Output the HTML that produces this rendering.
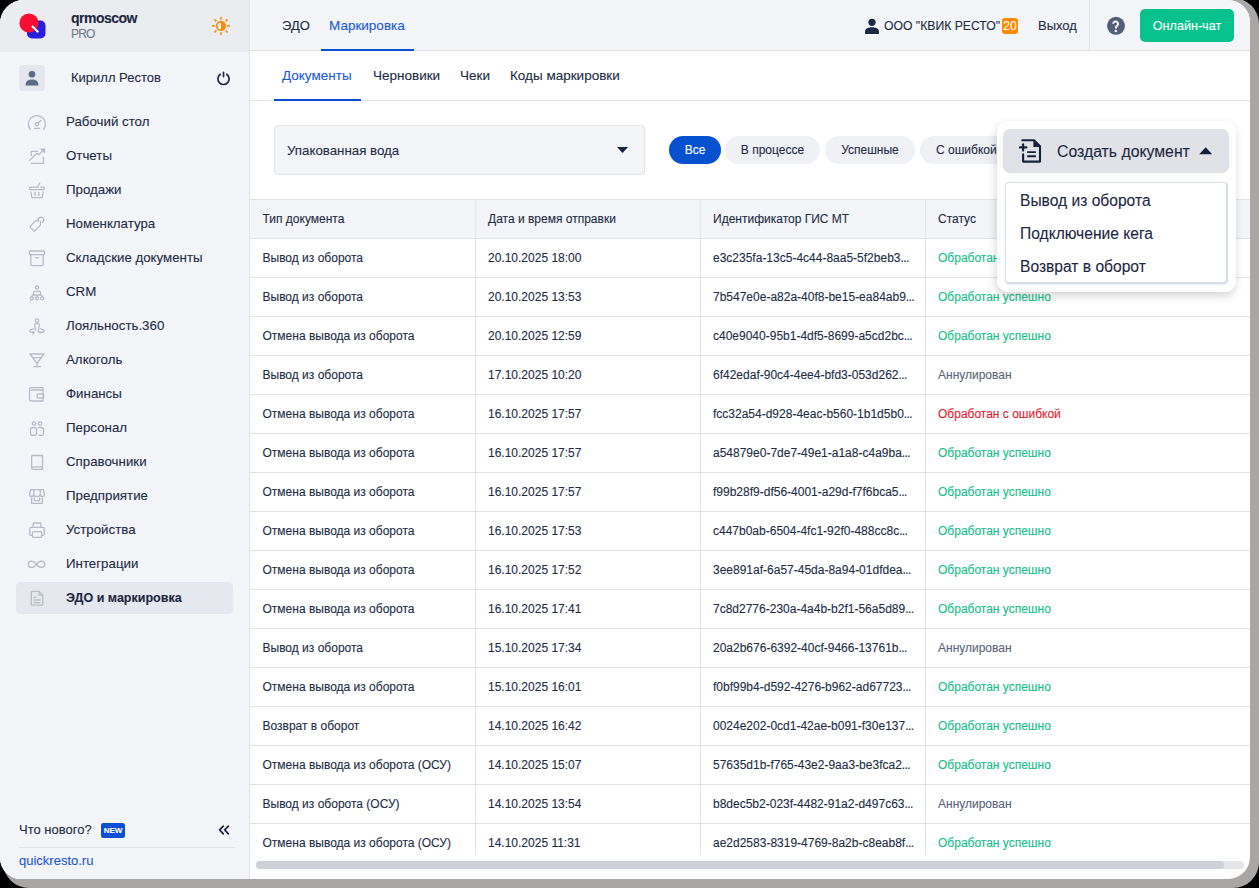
<!DOCTYPE html>
<html><head><meta charset="utf-8">
<style>
*{box-sizing:border-box;margin:0;padding:0}
html,body{width:1259px;height:888px;overflow:hidden;background:#000;font-family:"Liberation Sans",sans-serif;color:#222c43;-webkit-text-stroke:0.1px}
#shadow{position:absolute;left:3px;top:-2px;width:1256px;height:890px;background:#a9a6a6;border-radius:26px}
#win{position:absolute;left:0;top:0;width:1250px;height:879px;background:#fff;border-radius:24px 22px 22px 21px;overflow:hidden}
.abs{position:absolute;white-space:nowrap}
#side{position:absolute;left:0;top:0;width:250px;height:879px;background:#f4f5f9;border-right:1px solid #e2e3e8}
#sidehead{position:absolute;left:0;top:0;width:249px;height:52px;background:#ebecf0}
.mi{position:absolute;left:66px;font-size:13.3px;color:#222c43;line-height:16px;white-space:nowrap}
.ic{position:absolute;left:26px;width:20px;height:20px;overflow:visible}
.ic *{fill:none;stroke:#b6bcc8;stroke-width:1.3;stroke-linecap:round;stroke-linejoin:round}
#top{position:absolute;left:250px;top:0;width:1000px;height:51px;background:#f4f5f9;border-bottom:1px solid #e2e3e8}
#sub{position:absolute;left:250px;top:51px;width:1000px;height:50px;background:#fff;border-bottom:1px solid #e2e3e8}
.tab{position:absolute;font-size:13.5px;line-height:16px;white-space:nowrap;color:#222c43}
.blue{color:#1a5ada}
#tbl{position:absolute;left:250px;top:199px;width:1000px;height:656px;overflow:hidden}
table{border-collapse:collapse;font-size:12px;table-layout:fixed;width:1126px}
td,th{border:1px solid #e2e3e8;height:39px;padding:0 0 0 12.5px;text-align:left;font-weight:normal;white-space:nowrap;color:#222c43;overflow:hidden}
td:first-child,th:first-child{border-left:none}
th{background:#f4f5f9}
.ok{color:#12c08a}.ann{color:#5b6577}.err{color:#e8192c}
.pill{position:absolute;top:136px;height:28px;border-radius:14px;background:#f0f1f5;font-size:12px;line-height:28px;padding:0 16px;white-space:nowrap;color:#222c43}
</style></head><body>
<div id="shadow"></div>
<div id="win">
<div id="side">
 <div id="sidehead"></div>
 <svg class="abs" style="left:0;top:0" width="250" height="879" viewBox="0 0 250 879">
  <!-- logo -->
  <rect x="27" y="20.5" width="18.5" height="18" rx="5" fill="#2a1fe0"/>
  <circle cx="29" cy="23" r="9.6" fill="#fb0d32"/>
  <line x1="32" y1="26" x2="38.3" y2="32.3" stroke="#fff" stroke-width="2" stroke-linecap="butt"/>
  <!-- sun -->
  <g stroke="#fb8c0a" stroke-width="1.7" stroke-linecap="round" fill="none">
   <circle cx="221" cy="25.9" r="4.3"/>
   <line x1="227.90" y1="25.90" x2="229.30" y2="25.90"/><line x1="226.09" y1="30.99" x2="227.08" y2="31.98"/><line x1="221.00" y1="32.80" x2="221.00" y2="34.20"/><line x1="215.91" y1="30.99" x2="214.92" y2="31.98"/><line x1="214.10" y1="25.90" x2="212.70" y2="25.90"/><line x1="215.91" y1="20.81" x2="214.92" y2="19.82"/><line x1="221.00" y1="19.00" x2="221.00" y2="17.60"/><line x1="226.09" y1="20.81" x2="227.08" y2="19.82"/>
  </g>
  <path d="M221 21.6 A4.3 4.3 0 0 1 221 30.2 Z" fill="#fb8c0a"/>
  <!-- avatar -->
  <rect x="19" y="65" width="26" height="26" rx="4" fill="#e4e7ed"/>
  <circle cx="32" cy="74.3" r="3.3" fill="#5b6b86"/>
  <path d="M25.5 85.5 C25.5 81 28.5 79.5 32 79.5 C35.5 79.5 38.5 81 38.5 85.5 Z" fill="#5b6b86"/>
  <!-- power -->
  <g stroke="#1d2a45" stroke-width="1.7" fill="none" stroke-linecap="round">
   <path d="M220.3 74.3 A5.6 5.6 0 1 0 226.7 74.3"/>
   <line x1="223.5" y1="72.4" x2="223.5" y2="76.6"/>
  </g>
  <!-- selected bg -->
  <rect x="16" y="582" width="217" height="32" rx="5" fill="#e6e8ef"/>
  <g fill="none" stroke="#b7bdc8" stroke-width="1.3" stroke-linecap="round" stroke-linejoin="round">
   <!-- gauge -->
   <path d="M30.2 129.3 A8.5 8.5 0 1 1 43.6 129.3"/>
   <circle cx="37" cy="124.2" r="1.6"/>
   <line x1="38.2" y1="123" x2="40.8" y2="120.4"/>
   <line x1="34.4" y1="128.3" x2="39.6" y2="128.3"/>
   <!-- chart -->
   <path d="M31.3 155.6 V151.3 H37.6"/>
   <path d="M31.3 163.4 H43.5 V157"/>
   <path d="M29.3 160.6 L36.9 153.3 L38.9 154.6 L44.2 149.4"/>
   <path d="M41.2 149.2 H44.5 V152.5 Z" fill="#b7bdc8"/>
   <!-- basket -->
   <line x1="37.6" y1="187.2" x2="39.6" y2="183.2"/>
   <path d="M38 187.1 H31 Q29.6 187.1 29.6 188.4 Q29.6 189.7 31 189.7 H43 Q44.4 189.7 44.4 188.4 Q44.4 187.1 43 187.1 H41"/>
   <path d="M30.9 192 L31.9 197.6 H42.1 L43.1 192"/>
   <line x1="35.1" y1="192.4" x2="35.1" y2="195.4"/><line x1="38.8" y1="192.4" x2="38.8" y2="195.4"/>
   <!-- tag -->
   <path d="M38.5 221.4 Q37.8 220.2 36.5 220.3 Q36 220.4 35.6 220.8 L30.4 226.1 Q29.8 226.8 30.4 227.4 L33.8 230.8 Q34.4 231.4 35 230.8 L40 225.6 Q40.5 225.1 40.5 224.4 V221.4"/>
   <path d="M38.4 220.6 A2.7 2.7 0 1 1 42.4 222.3"/>
   <!-- archive -->
   <rect x="29.4" y="251" width="15.2" height="3.6" rx="1"/>
   <path d="M30.8 254.8 V264.2 Q30.8 265.6 32.2 265.6 H41.8 Q43.2 265.6 43.2 264.2 V254.8"/>
   <line x1="35.5" y1="257.8" x2="38.5" y2="257.8"/>
   <!-- crm -->
   <circle cx="37" cy="287.4" r="1.6"/>
   <path d="M33.5 294.8 V292.6 Q33.5 291.3 34.8 291.3 H39.2 Q40.5 291.3 40.5 292.6 V294.8"/>
   <path d="M31.8 296.9 Q32 295 34 295 H40 Q42 295 42.2 296.9 M37 295 V296.9"/>
   <circle cx="31.8" cy="298.4" r="1.5"/><circle cx="37" cy="298.4" r="1.5"/><circle cx="42.2" cy="298.4" r="1.5"/>
   <!-- loyalty -->
   <circle cx="37" cy="320.6" r="1.7"/>
   <path d="M35.6 330.4 L34.6 325.2 Q34.4 323.5 37 323.5 Q39.6 323.5 39.4 325.2 L38.4 330.4 Q38.4 332.5 40.5 332.5"/>
   <path d="M33.6 328.9 Q29.8 329.5 29.8 330.8 Q29.8 332.2 33.6 332.6"/>
   <path d="M40.4 328.9 Q44.2 329.5 44.2 330.8 Q44.2 332.5 40.4 332.5"/>
   <path d="M32.9 331.5 L34.1 332.6 L32.9 333.7"/>
   <!-- cocktail -->
   <path d="M30 354 H44 L37 363.5 Z"/>
   <line x1="32.6" y1="357.6" x2="41.4" y2="357.6"/>
   <line x1="37" y1="363.5" x2="37" y2="366.5"/>
   <line x1="33.6" y1="366.6" x2="40.4" y2="366.6"/>
   <!-- wallet -->
   <path d="M43 389 V387.6 H31 Q29.5 387.6 29.5 389.2 V399.4 Q29.5 401 31 401 H43 V390 H31"/>
   <rect x="37.2" y="394" width="6.4" height="4" rx="1"/>
   <!-- personnel -->
   <circle cx="34" cy="423.5" r="1.7"/><circle cx="40" cy="423.5" r="1.7"/>
   <path d="M32 435.4 Q30.9 435.4 30.8 434.4 L30.3 430.4 Q30.2 427.5 33 427.5 H34 Q36.8 427.5 36.7 430.4 L36.2 434.4 Q36.1 435.4 35 435.4 Z"/>
   <path d="M38.6 427.5 H41 Q43.8 427.5 43.7 430.4 L43.2 434.4 Q43.1 435.4 42 435.4 H38.8"/>
   <!-- book -->
   <path d="M31.6 466.8 V456.8 Q31.6 455.5 32.9 455.5 H42.5 V469.4 H33.2 Q31.6 469.4 31.6 468.1 Q31.6 466.8 33.2 466.8 H42.5"/>
   <!-- shop -->
   <path d="M30.6 489.6 H43.4 L44.4 494.2 Q44.4 496.4 42.3 496.4 Q40.2 496.4 40.2 494.2 Q40.2 496.4 37 496.4 Q33.8 496.4 33.8 494.2 Q33.8 496.4 31.7 496.4 Q29.6 496.4 29.6 494.2 Z M33.8 489.6 V494.2 M40.2 489.6 V494.2"/>
   <path d="M31.6 498 V503.4 H42.4 V498"/>
   <path d="M34.3 498 V500.6 H39.7 V498"/>
   <!-- printer -->
   <path d="M33.2 527 V523 H40.8 V527"/>
   <path d="M32.4 535.3 H30.8 Q29.8 535.3 29.8 534.3 V528.3 Q29.8 527.3 30.8 527.3 H43.2 Q44.2 527.3 44.2 528.3 V534.3 Q44.2 535.3 43.2 535.3 H41.6"/>
   <rect x="32.4" y="531.6" width="9.2" height="5.8" rx="0.8"/>
   <!-- infinity -->
   <path d="M36.5 564.3 C33.5 560 28.3 560.3 28.3 564.3 C28.3 568.3 33.5 568.6 36.5 564.3 C39.5 560 44.7 560.3 44.7 564.3 C44.7 568.3 39.5 568.6 36.5 564.3 Z"/>
   <!-- doc -->
   <path d="M39 591.3 H32.5 Q31.3 591.3 31.3 592.5 V604 Q31.3 605.2 32.5 605.2 H41.6 Q42.8 605.2 42.8 604 V595.1 Z M39 591.3 V595.1 H42.8"/>
   <line x1="34" y1="597.3" x2="36" y2="597.3"/><line x1="34" y1="600" x2="40" y2="600"/><line x1="34" y1="602.6" x2="40" y2="602.6"/>
  </g>
  <!-- NEW badge -->
  <rect x="101" y="823" width="24" height="15" rx="2.5" fill="#0b4fd3"/>
  <!-- collapse -->
  <g stroke="#1d2a45" stroke-width="1.8" fill="none" stroke-linecap="round" stroke-linejoin="round">
   <path d="M223.3 826.1 L219.6 829.9 L223.3 833.8"/><path d="M228.4 826.1 L224.7 829.9 L228.4 833.8"/>
  </g>
  <line x1="19" y1="847.5" x2="235" y2="847.5" stroke="#e2e4ea" stroke-width="1"/>
 </svg>
 <div class="abs" style="left:71px;top:9px;font-size:14px;letter-spacing:-0.5px;font-weight:bold;line-height:18px;color:#1d2740">qrmoscow</div>
 <div class="abs" style="left:71px;top:27px;font-size:12px;letter-spacing:-0.8px;line-height:14px;color:#737b8c">PRO</div>
 <div class="abs" style="left:71px;top:70px;font-size:13px;line-height:16px">Кирилл Рестов</div>
 <div class="mi" style="top:114px">Рабочий стол</div>
 <div class="mi" style="top:148px">Отчеты</div>
 <div class="mi" style="top:182px">Продажи</div>
 <div class="mi" style="top:216px">Номенклатура</div>
 <div class="mi" style="top:250px">Складские документы</div>
 <div class="mi" style="top:284px">CRM</div>
 <div class="mi" style="top:318px">Лояльность.360</div>
 <div class="mi" style="top:352px">Алкоголь</div>
 <div class="mi" style="top:386px">Финансы</div>
 <div class="mi" style="top:420px">Персонал</div>
 <div class="mi" style="top:454px">Справочники</div>
 <div class="mi" style="top:488px">Предприятие</div>
 <div class="mi" style="top:522px">Устройства</div>
 <div class="mi" style="top:556px">Интеграции</div>
 <div class="mi" style="top:590px;font-weight:bold;font-size:12.5px;color:#1d2740">ЭДО и маркировка</div>
 <div class="abs" style="left:19px;top:822px;font-size:13px;line-height:16px">Что нового?</div>
 <div class="abs" style="left:101px;top:823px;width:24px;height:15px;font-size:8px;font-weight:bold;line-height:16.5px;text-align:center;color:#fff">NEW</div>
 <div class="abs" style="left:19px;top:853px;font-size:13px;line-height:16px;color:#1a55d6">quickresto.ru</div>
</div>
<div id="top">
 <div class="tab" style="left:32px;top:18px;font-size:13px">ЭДО</div>
 <div class="tab blue" style="left:79px;top:18px">Маркировка</div>
 <div class="abs" style="left:71px;top:49px;width:93px;height:2px;background:#0b4fd3"></div>
 <svg class="abs" style="left:0;top:0" width="1000" height="50" viewBox="250 0 1000 50">
  <circle cx="872" cy="22.3" r="3.6" fill="#1d2a45"/>
  <path d="M865 34 V31.6 C865 28.4 868.5 27.3 872 27.3 C875.5 27.3 879 28.4 879 31.6 V34 Z" fill="#1d2a45"/>
  <rect x="1002" y="18" width="16" height="16" rx="3" fill="#ff8a00"/>
  <line x1="1089.5" y1="0" x2="1089.5" y2="50" stroke="#e2e3e8"/>
  <circle cx="1116" cy="25.8" r="9" fill="#535f78"/>
  <path d="M1113.2 23.8 A2.4 2.4 0 1 1 1117.3 25.5 Q1115.8 26.5 1115.8 28.4" stroke="#fff" stroke-width="1.9" fill="none"/>
  <circle cx="1115.8" cy="31" r="1.2" fill="#fff"/>
  <rect x="1140" y="9" width="94" height="33" rx="5" fill="#08c28d"/>
 </svg>
 <div class="tab" style="left:634px;top:18px;font-size:12.2px">ООО "КВИК РЕСТО"</div>
 <div class="abs" style="left:752px;top:18px;width:16px;height:16px;font-size:12px;line-height:16px;text-align:center;color:#fff">20</div>
 <div class="tab" style="left:788px;top:18px;font-size:13px">Выход</div>
  <div class="abs" style="left:890px;top:10px;width:94px;height:33px;font-size:12.6px;line-height:33px;text-align:center;color:#fff">Онлайн-чат</div>
</div>
<div id="sub">
 <div class="tab blue" style="left:32px;top:17px">Документы</div>
 <div class="tab" style="left:123px;top:17px">Черновики</div>
 <div class="tab" style="left:210px;top:17px">Чеки</div>
 <div class="tab" style="left:260px;top:17px">Коды маркировки</div>
 <div class="abs" style="left:24px;top:48px;width:87px;height:2px;background:#0b4fd3"></div>
</div>
<div class="abs" style="left:274px;top:125px;width:371px;height:50px;background:#f4f5f9;border:1px solid #e2e4ea;border-radius:4px"></div>
<div class="abs" style="left:287px;top:143px;font-size:13.3px;line-height:16px">Упакованная вода</div>
<svg class="abs" style="left:616px;top:147px" width="13" height="7" viewBox="0 0 13 7"><path d="M1 0 H12 L6.5 6 Z" fill="#14213d"/></svg>
<div class="pill" style="left:669px;width:52px;background:#0551d0;color:#fff;padding:0;text-align:center">Все</div>
<div class="pill" style="left:725px;width:95px;padding:0;text-align:center">В процессе</div>
<div class="pill" style="left:825px;width:90px;padding:0;text-align:center">Успешные</div>
<div class="pill" style="left:920px;width:110px;padding-left:16px">С ошибкой</div>
<div id="tbl"><table>
<colgroup><col style="width:225px"><col style="width:225px"><col style="width:225px"><col style="width:451px"></colgroup>
<tr><th>Тип документа</th><th>Дата и время отправки</th><th>Идентификатор ГИС МТ</th><th>Статус</th></tr>
<tr><td>Вывод из оборота</td><td>20.10.2025 18:00</td><td>e3c235fa-13c5-4c44-8aa5-5f2beb3<span style="letter-spacing:-0.6px">...</span></td><td><span class="ok">Обработан успешно</span></td></tr>
<tr><td>Вывод из оборота</td><td>20.10.2025 13:53</td><td>7b547e0e-a82a-40f8-be15-ea84ab9<span style="letter-spacing:-0.6px">...</span></td><td><span class="ok">Обработан успешно</span></td></tr>
<tr><td>Отмена вывода из оборота</td><td>20.10.2025 12:59</td><td>c40e9040-95b1-4df5-8699-a5cd2bc<span style="letter-spacing:-0.6px">...</span></td><td><span class="ok">Обработан успешно</span></td></tr>
<tr><td>Вывод из оборота</td><td>17.10.2025 10:20</td><td>6f42edaf-90c4-4ee4-bfd3-053d262<span style="letter-spacing:-0.6px">...</span></td><td><span class="ann">Аннулирован</span></td></tr>
<tr><td>Отмена вывода из оборота</td><td>16.10.2025 17:57</td><td>fcc32a54-d928-4eac-b560-1b1d5b0<span style="letter-spacing:-0.6px">...</span></td><td><span class="err">Обработан с ошибкой</span></td></tr>
<tr><td>Отмена вывода из оборота</td><td>16.10.2025 17:57</td><td>a54879e0-7de7-49e1-a1a8-c4a9ba<span style="letter-spacing:-0.6px">...</span></td><td><span class="ok">Обработан успешно</span></td></tr>
<tr><td>Отмена вывода из оборота</td><td>16.10.2025 17:57</td><td>f99b28f9-df56-4001-a29d-f7f6bca5<span style="letter-spacing:-0.6px">...</span></td><td><span class="ok">Обработан успешно</span></td></tr>
<tr><td>Отмена вывода из оборота</td><td>16.10.2025 17:53</td><td>c447b0ab-6504-4fc1-92f0-488cc8c<span style="letter-spacing:-0.6px">...</span></td><td><span class="ok">Обработан успешно</span></td></tr>
<tr><td>Отмена вывода из оборота</td><td>16.10.2025 17:52</td><td>3ee891af-6a57-45da-8a94-01dfdea<span style="letter-spacing:-0.6px">...</span></td><td><span class="ok">Обработан успешно</span></td></tr>
<tr><td>Отмена вывода из оборота</td><td>16.10.2025 17:41</td><td>7c8d2776-230a-4a4b-b2f1-56a5d89<span style="letter-spacing:-0.6px">...</span></td><td><span class="ok">Обработан успешно</span></td></tr>
<tr><td>Вывод из оборота</td><td>15.10.2025 17:34</td><td>20a2b676-6392-40cf-9466-13761b<span style="letter-spacing:-0.6px">...</span></td><td><span class="ann">Аннулирован</span></td></tr>
<tr><td>Отмена вывода из оборота</td><td>15.10.2025 16:01</td><td>f0bf99b4-d592-4276-b962-ad67723<span style="letter-spacing:-0.6px">...</span></td><td><span class="ok">Обработан успешно</span></td></tr>
<tr><td>Возврат в оборот</td><td>14.10.2025 16:42</td><td>0024e202-0cd1-42ae-b091-f30e137<span style="letter-spacing:-0.6px">...</span></td><td><span class="ok">Обработан успешно</span></td></tr>
<tr><td>Отмена вывода из оборота (ОСУ)</td><td>14.10.2025 15:07</td><td>57635d1b-f765-43e2-9aa3-be3fca2<span style="letter-spacing:-0.6px">...</span></td><td><span class="ok">Обработан успешно</span></td></tr>
<tr><td>Вывод из оборота (ОСУ)</td><td>14.10.2025 13:54</td><td>b8dec5b2-023f-4482-91a2-d497c63<span style="letter-spacing:-0.6px">...</span></td><td><span class="ann">Аннулирован</span></td></tr>
<tr><td>Отмена вывода из оборота (ОСУ)</td><td>14.10.2025 11:31</td><td>ae2d2583-8319-4769-8a2b-c8eab8f<span style="letter-spacing:-0.6px">...</span></td><td><span class="ok">Обработан успешно</span></td></tr></table></div>
<!-- scrollbar -->
<div class="abs" style="left:256px;top:861px;width:988px;height:8px;border-radius:4px;background:#e4e5e8"></div>
<div class="abs" style="left:256px;top:861px;width:968px;height:8px;border-radius:4px;background:#cdd0d6"></div>
<!-- popup -->
<div class="abs" style="left:997px;top:121px;width:239px;height:171px;background:#fff;border-radius:11px;box-shadow:-1px 4px 10px rgba(0,0,0,0.17)"></div>
<div class="abs" style="left:1003px;top:129px;width:226px;height:44px;background:#e1e2e7;border-radius:7px"></div>
<svg class="abs" style="left:1015px;top:135px" width="30" height="32" viewBox="1015 135 30 32">
 <g fill="none" stroke="#14213d" stroke-width="2.1" stroke-linecap="round" stroke-linejoin="round">
  <path d="M1022.3 140.3 H1034 L1040 146.3 V161.6 H1023.1 V154.2"/>
  <line x1="1019.9" y1="147.4" x2="1026.4" y2="147.4"/><line x1="1023.1" y1="144.2" x2="1023.1" y2="150.6"/>
 </g>
 <path d="M1033.4 139.4 L1041 147 H1033.4 Z" fill="#14213d"/>
 <g stroke="#14213d" stroke-width="1.9">
  <line x1="1027.2" y1="152.1" x2="1035.9" y2="152.1"/><line x1="1027.2" y1="156.3" x2="1035.9" y2="156.3"/>
 </g>
</svg>
<div class="abs" style="left:1057px;top:143px;font-size:15.8px;line-height:18px;color:#1d2740;-webkit-text-stroke:0.1px #1d2740">Создать документ</div>
<svg class="abs" style="left:1199px;top:146px" width="14" height="9" viewBox="0 0 14 9"><path d="M0.2 8.2 H13.2 L6.7 1.3 Z" fill="#14213d"/></svg>
<div class="abs" style="left:1005px;top:182px;width:223px;height:102px;background:#fff;border:1px solid #d8dee7;border-bottom-width:2px;border-right-width:2px;border-radius:4px;box-shadow:0 1px 2px rgba(0,0,0,0.06)"></div>
<div class="abs" style="left:1020px;top:192px;font-size:15.6px;line-height:18px;color:#1d2740;-webkit-text-stroke:0.1px #1d2740">Вывод из оборота</div>
<div class="abs" style="left:1020px;top:225px;font-size:15.6px;line-height:18px;color:#1d2740;-webkit-text-stroke:0.1px #1d2740">Подключение кега</div>
<div class="abs" style="left:1020px;top:258px;font-size:15.6px;line-height:18px;color:#1d2740;-webkit-text-stroke:0.1px #1d2740">Возврат в оборот</div>
</div>
</body></html>
